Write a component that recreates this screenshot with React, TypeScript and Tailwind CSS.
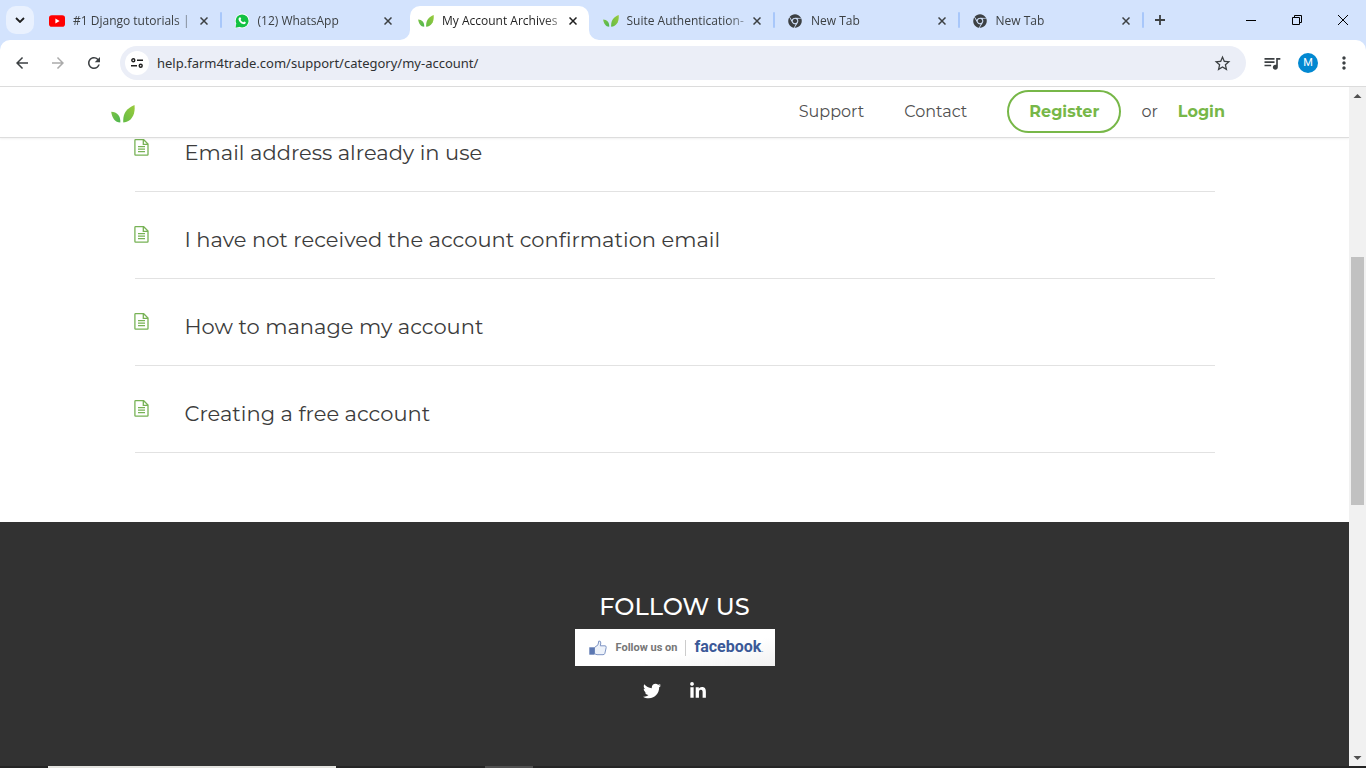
import React from "react";
import { FaChrome, FaLinkedinIn, FaTwitter } from "react-icons/fa";
import {
  MdArrowBack,
  MdArrowForward,
  MdMoreVert,
  MdQueueMusic,
  MdRefresh,
  MdStarBorder,
} from "react-icons/md";

type Tab = { title: string; icon: React.ReactNode; active?: boolean; divider?: boolean };

function Leaf({ className }: { className: string }) {
  return (
    <svg viewBox="0 0 24 18" className={className} aria-hidden="true">
      <defs>
        <linearGradient id="leafSmall" x1="0" y1="0" x2="1" y2="1">
          <stop offset="0" stopColor="#7cc344" />
          <stop offset="1" stopColor="#4db651" />
        </linearGradient>
        <linearGradient id="leafLarge" x1="1" y1="0" x2="0" y2="1">
          <stop offset="0" stopColor="#9bcb3c" />
          <stop offset="1" stopColor="#62bb46" />
        </linearGradient>
      </defs>
      <path d="M.2 6.800C6 7 9.800 11 9.300 17.600C4 17.500 1 13 .2 6.800Z" fill="url(#leafSmall)" />
      <path d="M23.500 0C24.500 9 21 16.500 12.300 17.600C11.500 8.500 15.500 3.500 23.500 0Z" fill="url(#leafLarge)" />
    </svg>
  );
}

function YouTube() {
  return (
    <svg viewBox="0 0 16 16" className="size-4" aria-hidden="true">
      <rect y="2.300" width="16" height="11.400" rx="2.800" fill="#f00" />
      <path d="M6.400 5.500L10.600 8L6.400 10.500Z" fill="#fff" />
    </svg>
  );
}

function WhatsApp() {
  return (
    <svg viewBox="0 0 16 16" className="size-4" aria-hidden="true">
      <path d="M8.100.6a7.300 7.300 0 1 1-3.300 13.800L.7 15.500l1.200-4A7.300 7.300 0 0 1 8.100.6Z" fill="#fff" />
      <circle cx="8.100" cy="7.900" r="6.500" fill="#12c143" />
      <path d="M2.300 10.500L1.500 14.700L6 13.800Z" fill="#12c143" />
      <path
        d="M5.800 4.300c.4-.2.7 0 .9.400l.5 1.100c.1.300-.5.900-.6 1.100.5 1 1.300 1.800 2.500 2.300.3 0 .8-.9 1.100-.8l1.300.7c.4.200.3.700.1 1.100-.5.900-1.500 1.100-2.400.9C6.700 10.400 5 8.500 4.600 6.700c-.2-1 .2-2 1.200-2.400Z"
        fill="#fff"
      />
    </svg>
  );
}

const chromeIcon = <FaChrome className="size-3.5 text-[#3c4043]" />;

const tabs: Tab[] = [
  { title: "#1 Django tutorials |", icon: <YouTube />, divider: true },
  { title: "(12) WhatsApp", icon: <WhatsApp /> },
  { title: "My Account Archives", icon: <Leaf className="h-3 w-4" />, active: true },
  { title: "Suite Authentication-", icon: <Leaf className="h-3 w-4" />, divider: true },
  { title: "New Tab", icon: chromeIcon, divider: true },
  { title: "New Tab", icon: chromeIcon, divider: true },
];

function Cross() {
  return (
    <svg viewBox="0 0 8 8" className="size-2" aria-hidden="true">
      <path d="M.5.5L7.500 7.500M7.500.5L.5 7.500" stroke="currentColor" strokeWidth="1.500" />
    </svg>
  );
}

function BrowserTab({ tab }: { tab: Tab }) {
  return (
    <div className="flex h-[34px]">
      <div
        className={
          tab.active
            ? "relative flex min-w-0 flex-1 items-center rounded-t-[10px] bg-white px-2 pb-1 text-[#1f1f1f]"
            : "flex min-w-0 flex-1 items-center px-2 pb-1 text-[#3c4043]"
        }
      >
        {tab.active && (
          <>
            <svg viewBox="0 0 10 10" className="absolute bottom-0 -left-2.5 size-2.5" aria-hidden="true">
              <path d="M10 0V10H0A10 10 0 0 0 10 0Z" fill="#fff" />
            </svg>
            <svg viewBox="0 0 10 10" className="absolute -right-2.5 bottom-0 size-2.5" aria-hidden="true">
              <path d="M0 0V10H10A10 10 0 0 1 0 0Z" fill="#fff" />
            </svg>
          </>
        )}
        <span className="flex w-4 shrink-0 justify-center">{tab.icon}</span>
        <span className="ml-2 min-w-0 flex-1 [mask-image:linear-gradient(to_right,black_82%,rgba(0,0,0,0.3))] text-xs leading-4 whitespace-nowrap">
          {tab.title}
        </span>
        <button type="button" aria-label={`Close ${tab.title}`} className="flex size-4 shrink-0 items-center justify-center">
          <Cross />
        </button>
      </div>
      <span className={tab.divider ? "mt-1.5 mr-1 h-4 w-0.5 shrink-0 rounded-full bg-[#a8c7fa]" : "mr-1 w-0.5 shrink-0"} />
    </div>
  );
}

function TabStrip() {
  return (
    <div className="flex h-10 shrink-0 items-end bg-[#d3e3fd]">
      <button
        type="button"
        aria-label="Search tabs"
        className="mb-1.5 ml-1.5 flex size-7 shrink-0 items-center justify-center rounded-[10px] bg-[#e9f1fe]"
      >
        <svg viewBox="0 0 10 6" className="h-1.5 w-2.5" fill="none" stroke="#1f1f1f" strokeWidth="1.800" aria-hidden="true">
          <path d="M1 1L5 5L9 1" />
        </svg>
      </button>
      <div className="ml-[7px] grid max-w-[1107px] flex-1 grid-cols-6">
        {tabs.map((tab, i) => (
          <BrowserTab key={i} tab={tab} />
        ))}
      </div>
      <button type="button" aria-label="New tab" className="flex h-10 w-6 shrink-0 items-center justify-center">
        <svg viewBox="0 0 10 10" className="size-2.5" stroke="#3c4043" strokeWidth="1.800" aria-hidden="true">
          <path d="M5 0V10M0 5H10" />
        </svg>
      </button>
      <div className="ml-auto flex h-10 text-black">
        <button type="button" aria-label="Minimize" className="flex w-[46px] items-center justify-center">
          <span className="h-px w-2.5 bg-black" />
        </button>
        <button type="button" aria-label="Restore" className="flex w-[46px] items-center justify-center">
          <svg viewBox="0 0 10 10" className="size-2.5" fill="none" stroke="currentColor" aria-hidden="true">
            <path d="M.5 2.500H7.500V9.500H.5ZM2.500 2.500V.5H9.500V7.500H7.500" />
          </svg>
        </button>
        <button type="button" aria-label="Close" className="flex w-[46px] items-center justify-center">
          <svg viewBox="0 0 10 10" className="size-2.5" stroke="currentColor" aria-hidden="true">
            <path d="M0 0L10 10M10 0L0 10" />
          </svg>
        </button>
      </div>
    </div>
  );
}

function Toolbar() {
  const button = "flex size-9 shrink-0 items-center justify-center text-[#3c4043]";
  return (
    <div className="shrink-0 bg-[#d3e3fd]">
      <div className="flex h-[47px] items-center rounded-t-[10px] border-b border-[#dcdcdc] bg-white px-1">
        <button type="button" aria-label="Back" className={button}>
          <MdArrowBack className="size-[18px]" />
        </button>
        <button type="button" aria-label="Forward" className={button}>
          <MdArrowForward className="size-[18px] text-[#ababab]" />
        </button>
        <button type="button" aria-label="Reload" className={button}>
          <MdRefresh className="size-[18px]" />
        </button>
        <div className="mx-2 flex h-[34px] flex-1 items-center rounded-full bg-[#ebeef7] pr-3.5 pl-[5px]">
          <button
            type="button"
            aria-label="View site information"
            className="flex size-6 shrink-0 items-center justify-center rounded-full bg-white"
          >
            <svg viewBox="0 0 12 10" className="h-2.5 w-3" fill="none" stroke="#1f1f1f" strokeWidth="1.400" aria-hidden="true">
              <circle cx="2.300" cy="2.200" r="1.500" />
              <path d="M6 2.200H12M0 7.800H6" />
              <circle cx="9.700" cy="7.800" r="1.500" />
            </svg>
          </button>
          <input
            type="text"
            aria-label="Address"
            defaultValue="help.farm4trade.com/support/category/my-account/"
            className="ml-2 min-w-0 flex-1 bg-transparent font-['Noto_Sans',sans-serif] text-[13px] leading-5 text-[#2f3133] outline-none"
          />
          <button type="button" aria-label="Bookmark this page">
            <MdStarBorder className="size-[19px] text-[#3c4043]" />
          </button>
        </div>
        <button type="button" aria-label="Media controls" className={button}>
          <MdQueueMusic className="size-5" />
        </button>
        <button type="button" aria-label="Profile" className={button}>
          <span className="flex size-5 items-center justify-center rounded-full bg-[#0288d1] font-[Roboto,sans-serif] text-[11px] text-white">
            M
          </span>
        </button>
        <button type="button" aria-label="Menu" className={button}>
          <MdMoreVert className="size-5" />
        </button>
      </div>
    </div>
  );
}

function SiteHeader() {
  return (
    <header className="relative z-10 flex h-[51px] shrink-0 items-center border-b border-[#dddddd] bg-white pr-[124px] pb-px pl-[111px] shadow-[0_1px_2px_rgba(0,0,0,0.06)]">
      <a href="#home" aria-label="Farm4Trade" className="mt-1">
        <Leaf className="h-[18px] w-6" />
      </a>
      <nav className="ml-auto flex items-center text-base leading-6 text-[#505050]">
        <a href="#support">Support</a>
        <a href="#contact" className="ml-10">
          Contact
        </a>
        <a
          href="#register"
          className="ml-10 flex h-[43px] items-center rounded-full border-2 border-[#77b748] px-5 font-bold text-[#77b748]"
        >
          Register
        </a>
        <span className="ml-5">or</span>
        <a href="#login" className="ml-5 font-bold text-[#77b748]">
          Login
        </a>
      </nav>
    </header>
  );
}

const articles = [
  "Email address already in use",
  "I have not received the account confirmation email",
  "How to manage my account",
  "Creating a free account",
];

function ArticleIcon() {
  return (
    <svg viewBox="0 0 15 17" className="mt-0.5 -ml-px h-[17px] w-[15px] shrink-0" fill="none" stroke="#77b255" strokeWidth="1.300" aria-hidden="true">
      <path d="M1.600.7H9.700L14 5V15.400Q14 16.100 13.300 16.100H1.600Q.9 16.100.9 15.400V1.400Q.9.700 1.600.7ZM9.300.9V5.400H13.800M4 7.600H11M4 10.100H11M4 12.600H11" />
    </svg>
  );
}

function Articles() {
  return (
    <main className="-mt-[33px] shrink-0 bg-white px-6 pb-[69px]">
      <ul className="mx-auto max-w-[1080px]">
        {articles.map((title) => (
          <li key={title} className="border-b border-[#e2e2e2] pt-8 pb-[22px]">
            <a href="#article" className="flex items-start">
              <ArticleIcon />
              <span className="ml-9 text-[21px] leading-8 text-[#3c3c3c]">{title}</span>
            </a>
          </li>
        ))}
      </ul>
    </main>
  );
}

function SiteFooter() {
  return (
    <footer className="flex flex-1 flex-col items-center bg-[#323232] pt-[69px] text-white">
      <h2 className="text-2xl leading-8 font-medium">FOLLOW US</h2>
      <a
        href="#facebook"
        className="mt-1.5 flex h-[37px] w-[200px] items-center bg-linear-to-br from-white from-60% to-[#f1f1f1] pl-3.5 font-[Roboto,sans-serif] font-bold whitespace-nowrap"
      >
        <svg viewBox="0 0 18 16" className="h-4 w-[18px]" aria-hidden="true">
          <path
            d="M5.500 7.500L9 4.800L9.800 1Q11.900.7 11.800 3L11.300 5.800H16Q17.500 6 17.200 7.500L15.900 13.300Q15.500 14.700 14 14.700H8L5.500 13.800Z"
            fill="#edf2fa"
            stroke="#7189bd"
            strokeWidth=".9"
          />
          <path d="M.3 7.300H5.500V14.700H.3Z" fill="#5c78b2" />
        </svg>
        <span className="ml-[9px] text-[11px] leading-4 text-[#777777]">Follow us on</span>
        <span className="ml-2 h-4 w-px bg-[#cccccc]" />
        <span className="ml-2 flex items-baseline text-base leading-5 text-[#3b5998]">
          facebook<span className="text-[8px] leading-4 text-[#8c9dc3]">.</span>
        </span>
      </a>
      <div className="mt-4 flex items-center gap-7">
        <a href="#twitter" aria-label="Twitter">
          <FaTwitter className="size-[18px]" />
        </a>
        <a href="#linkedin" aria-label="LinkedIn">
          <FaLinkedinIn className="size-[18px]" />
        </a>
      </div>
    </footer>
  );
}

function Scrollbar() {
  return (
    <div className="flex w-[17px] shrink-0 flex-col items-center bg-[#f1f1f1]" aria-hidden="true">
      <svg viewBox="0 0 17 17" className="size-[17px]">
        <path d="M8.500 7L12.500 11H4.500Z" fill="#505050" />
      </svg>
      <div className="flex-[153]" />
      <div className="w-[13px] flex-[248] bg-[#c1c1c1]" />
      <div className="flex-[244]" />
      <svg viewBox="0 0 17 17" className="size-[17px]">
        <path d="M8.500 11L12.500 7H4.500Z" fill="#505050" />
      </svg>
    </div>
  );
}

export default function App() {
  return (
    <div className="flex h-screen flex-col overflow-hidden bg-white font-['Open_Sans',sans-serif]">
      <TabStrip />
      <Toolbar />
      <div className="flex min-h-0 flex-1">
        <div className="flex min-w-0 flex-1 flex-col overflow-hidden font-[Montserrat,Inter,sans-serif]">
          <SiteHeader />
          <Articles />
          <SiteFooter />
        </div>
        <Scrollbar />
      </div>
      <div className="flex h-0.5 shrink-0 bg-[#252525]">
        <span className="ml-12 w-72 bg-[#e4e4e0]" />
        <span className="ml-[149px] w-12 bg-[#505050]" />
      </div>
    </div>
  );
}
